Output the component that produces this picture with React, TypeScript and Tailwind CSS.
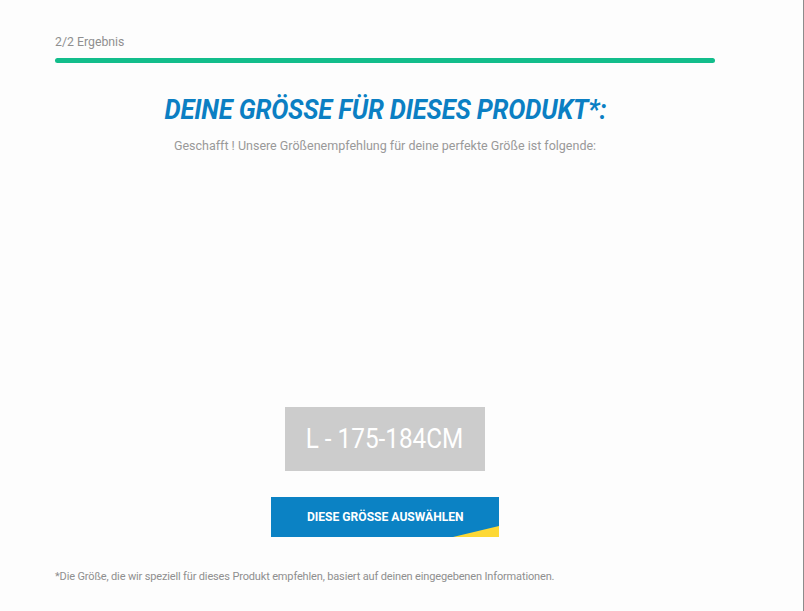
import React from "react";

export default function App() {
  return (
    <div
      className="relative h-[611px] w-[804px] bg-[#fdfdfd] text-[#8a8a8a]"
      style={{ fontFamily: "Roboto, 'Liberation Sans', sans-serif" }}
    >
      <div className="absolute right-0 top-0 h-full w-px bg-[#8c8c8c]" />
      <div className="ml-[55px] w-[660px] pt-[34px]">
        <div className="text-[12.3px] leading-[16px] text-[#8f8f8f]">2/2 Ergebnis</div>
        <div className="mt-[8px] h-[5px] w-full rounded-full bg-[#12bd8b]" />

        <div className="mt-[30px] flex justify-center">
          <h1 className="origin-center scale-x-[0.915] whitespace-nowrap text-[28px] font-bold italic leading-[34px] tracking-[-0.2px] text-[#0b7fc3]">
            DEINE GRÖSSE FÜR DIESES PRODUKT*:
          </h1>
        </div>
        <p className="mt-[11px] text-center text-[12.5px] leading-[16px] text-[#999999]">
          Geschafft ! Unsere Größenempfehlung für deine perfekte Größe ist folgende:
        </p>

        <div className="mt-[253px] flex justify-center">
          <div className="flex h-[64px] w-[200px] items-center justify-center bg-[#cccccc] text-white">
            <span className="inline-block scale-x-[0.9] text-[27px] font-normal">L - 175-184CM</span>
          </div>
        </div>

        <div className="mt-[26px] flex justify-center">
          <button className="relative h-[40px] w-[228px] overflow-hidden bg-[#0b82c4] text-[13px] font-bold text-white">
            <span className="relative z-10 inline-block scale-x-[0.93]">DIESE GRÖSSE AUSWÄHLEN</span>
            <svg className="absolute bottom-0 right-0" width="46" height="11" viewBox="0 0 46 11">
              <polygon points="0,11 46,0 46,11" fill="#fdd835" />
            </svg>
          </button>
        </div>

        <p className="mt-[33px] text-[11px] leading-[14px] tracking-[-0.15px] text-[#8f8f8f]">
          *Die Größe, die wir speziell für dieses Produkt empfehlen, basiert auf deinen eingegebenen Informationen.
        </p>
      </div>
    </div>
  );
}
